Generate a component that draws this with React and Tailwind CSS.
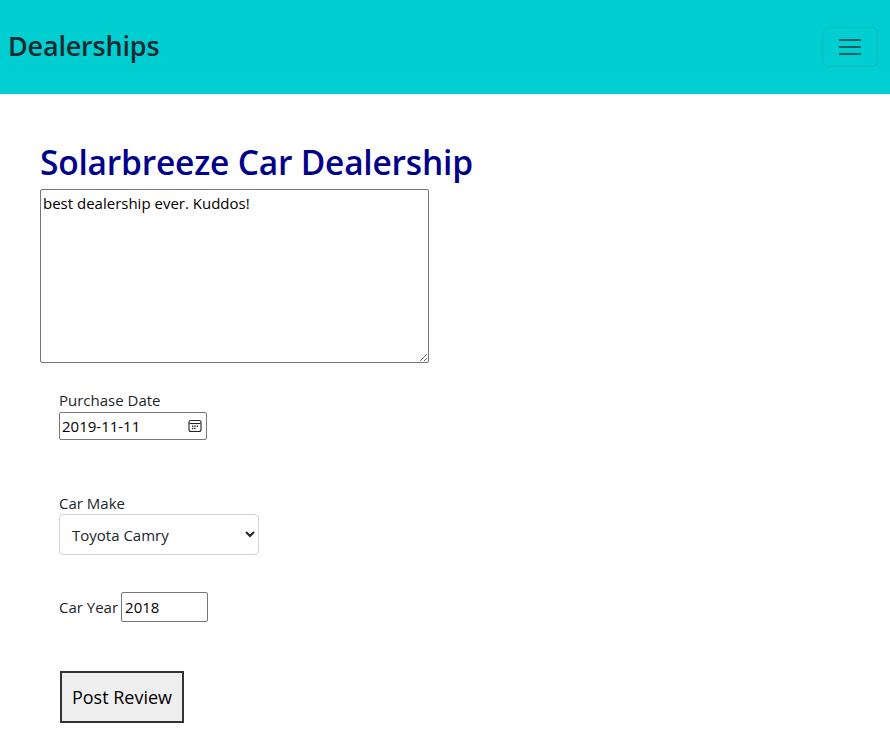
import { useState } from 'react';

const font = { fontFamily: '"Open Sans", "Noto Sans", sans-serif' };

const CalendarIcon = () => (
  <svg width="14" height="14" viewBox="0 0 14 14" fill="none">
    <rect x="1" y="1.5" width="12" height="11" rx="2" stroke="#222" strokeWidth="1.1" />
    <path d="M1.5 4.5h11" stroke="#222" strokeWidth="1.1" />
    <rect x="4" y="6.5" width="1.4" height="1.4" fill="#222" />
    <rect x="6.3" y="6.5" width="1.4" height="1.4" fill="#222" />
    <rect x="8.6" y="6.5" width="1.4" height="1.4" fill="#222" />
    <rect x="4" y="8.8" width="1.4" height="1.4" fill="#222" />
    <rect x="6.3" y="8.8" width="1.4" height="1.4" fill="#222" />
  </svg>
);

const App = () => {
  const [review, setReview] = useState('best dealership ever. Kuddos!');
  const [date, setDate] = useState('2019-11-11');
  const [make, setMake] = useState('Toyota Camry');
  const [year, setYear] = useState('2018');

  return (
    <div className="min-h-screen bg-white text-[#212529]" style={font}>
      {/* Navbar */}
      <nav className="h-[94px] bg-[#00ced1] flex items-center justify-between pl-2 pr-3">
        <span className="text-[27px] font-semibold text-[#1f2a30] tracking-[-0.2px] -mt-[2px]">Dealerships</span>
        <button className="w-[56px] h-[40px] rounded-md border border-black/10 flex items-center justify-center">
          <svg width="26" height="22" viewBox="0 0 26 22">
            <path d="M2 4h22M2 11h22M2 18h22" stroke="#0f5e60" strokeWidth="2" />
          </svg>
        </button>
      </nav>

      {/* Main */}
      <main className="px-10 pt-[47px]">
        <h1 className="text-[33.5px] leading-[42px] font-semibold text-[#00008b] tracking-[-0.2px] mb-[6px]">
          Solarbreeze Car Dealership
        </h1>
        <textarea
          className="block w-[389px] h-[174px] border border-[#767676] rounded-[2px] px-[2px] py-[2px] text-[15px] text-black resize-y"
          value={review}
          onChange={(e) => setReview(e.target.value)}
        />

        <div className="pl-[19px] pt-[26px] text-[15px]">
          <div className="leading-[22px] mb-[1px]">Purchase Date</div>
          <div className="relative w-[148px]">
            <input
              type="text"
              className="block w-[148px] h-[28px] border border-[#767676] rounded-[2px] px-[2px] text-[15px] text-black"
              value={date}
              onChange={(e) => setDate(e.target.value)}
            />
            <span className="absolute right-[5px] top-[7px] pointer-events-none">
              <CalendarIcon />
            </span>
          </div>

          <div className="mt-[52px] leading-[22px]">Car Make</div>
          <select
            className="block w-[200px] h-[41px] border border-[#ced4da] rounded-[4px] pl-2 text-[15px] bg-white"
            value={make}
            onChange={(e) => setMake(e.target.value)}
          >
            <option>Toyota Camry</option>
            <option>Honda Accord</option>
            <option>Ford Focus</option>
          </select>

          <div className="mt-[37px] flex items-center gap-[3px]">
            <span>Car Year</span>
            <input
              type="number"
              className="w-[87px] h-[30px] border border-[#767676] rounded-[2px] px-[3px] text-[15px] text-black"
              value={year}
              onChange={(e) => setYear(e.target.value)}
            />
          </div>

          <button className="mt-[49px] ml-[1px] w-[124px] h-[52px] border-2 border-[#333] bg-[#efefef] text-[18px] text-black">
            Post Review
          </button>
        </div>
      </main>
    </div>
  );
};

export default App;
